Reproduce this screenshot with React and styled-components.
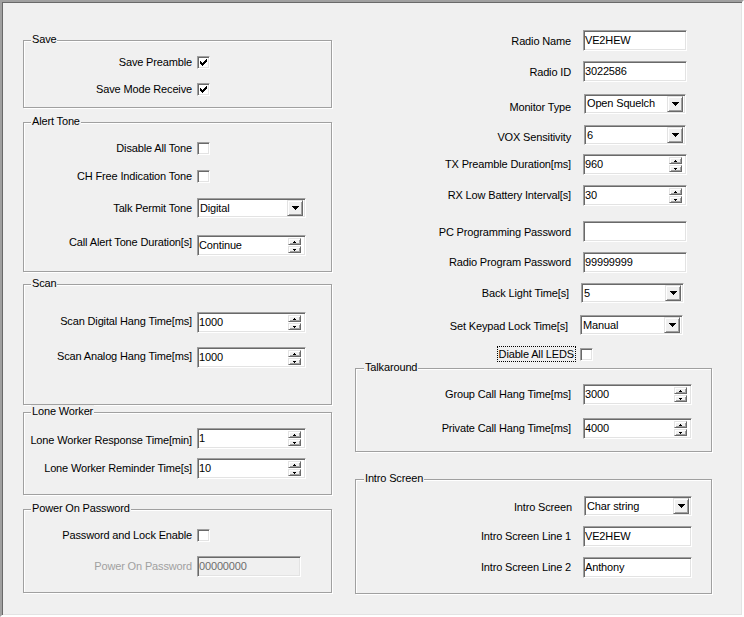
import React from 'react';
import styled, { createGlobalStyle, css } from 'styled-components';

const Global = createGlobalStyle`
  html, body { margin: 0; padding: 0; background: #f0f0f0; }
  body { font-family: "Liberation Sans", Arial, sans-serif; font-size: 11px; letter-spacing: -0.15px; color: #000; }
  * { box-sizing: border-box; }
`;

const sunken = css`
  border: 1px solid;
  border-color: #a0a0a0 #fff #fff #a0a0a0;
  box-shadow: inset 1px 1px 0 #696969, inset -1px -1px 0 #e3e3e3;
`;

const raised = css`
  border: 1px solid;
  border-color: #e3e3e3 #696969 #696969 #e3e3e3;
  box-shadow: inset 1px 1px 0 #fff, inset -1px -1px 0 #a0a0a0;
  background: #f0f0f0;
`;

const Window = styled.div`
  width: 744px;
  height: 617px;
  border-style: solid;
  border-width: 2px;
  border-color: #a0a0a0 #fff #fff #a0a0a0;
  box-shadow: inset 1px 1px 0 #696969, inset -1px -1px 0 #e3e3e3;
  background: #f0f0f0;
  display: grid;
  grid-template-columns: 309px 357px;
  column-gap: 23px;
  padding-left: 21px;
  align-items: start;
`;

const Column = styled.div`
  display: flex;
  flex-direction: column;
  padding-top: ${(p) => p.$top}px;
`;

const Group = styled.div`
  position: relative;
  display: flex;
  flex-direction: column;
  height: ${(p) => p.$h}px;
  margin-top: ${(p) => p.$mt || 0}px;
  padding-top: ${(p) => p.$pt}px;
  border: 1px solid #a0a0a0;
  box-shadow: 1px 1px 0 #fff, inset 1px 1px 0 #fff;
`;

const Legend = styled.span`
  position: absolute;
  top: -8px;
  left: ${(p) => p.$left}px;
  padding: 0 1px;
  line-height: 13px;
  background: #f0f0f0;
  white-space: nowrap;
`;

const Row = styled.div`
  display: grid;
  grid-template-columns: ${(p) => p.$label}px max-content;
  column-gap: ${(p) => p.$gap}px;
  align-items: center;
  margin-top: ${(p) => p.$mt || 0}px;
`;

const Label = styled.span`
  text-align: right;
  white-space: nowrap;
  line-height: 13px;
  color: ${(p) => (p.$disabled ? '#a0a0a0' : '#000')};
  ${(p) => (p.$dy > 0 ? `margin-top: ${p.$dy * 2}px;` : '')}
  ${(p) => (p.$dy < 0 ? `margin-bottom: ${-p.$dy * 2}px;` : '')}
`;

const FocusLabel = styled.span`
  justify-self: end;
  white-space: nowrap;
  line-height: 14px;
  padding: 0 1px;
  border: 1px dotted #000;
`;

const TextBox = styled.div`
  ${sunken}
  width: ${(p) => p.$w}px;
  height: 21px;
  padding: 3px 0 0 1px;
  line-height: 13px;
  white-space: nowrap;
  background: ${(p) => (p.$disabled ? '#f0f0f0' : '#fff')};
  color: ${(p) => (p.$disabled ? '#6d6d6d' : '#000')};
`;

const ComboBox = styled.div`
  ${sunken}
  width: ${(p) => p.$w}px;
  height: 20px;
  padding: 1px 2px 1px 1px;
  display: flex;
  align-items: center;
  background: #fff;
`;

const FieldText = styled.span`
  flex: 1;
  padding-left: 1px;
  line-height: 13px;
  white-space: nowrap;
`;

const DropButton = styled.span`
  ${raised}
  width: 16px;
  height: 16px;
  display: flex;
  align-items: center;
  justify-content: center;
`;

const SpinBox = styled.div`
  ${sunken}
  width: ${(p) => p.$w}px;
  height: 21px;
  padding: 2px 4px 2px 1px;
  display: flex;
  align-items: stretch;
  background: #fff;
`;

const SpinText = styled.span`
  flex: 1;
  padding: 1px 0 0 0;
  line-height: 13px;
  white-space: nowrap;
`;

const SpinButtons = styled.span`
  display: flex;
  flex-direction: column;
  width: 13px;
  gap: 1px;
`;

const SpinButton = styled.span`
  ${raised}
  flex: 1;
  display: flex;
  align-items: center;
  justify-content: center;
`;

const CheckBox = styled.span`
  ${sunken}
  width: 13px;
  height: 13px;
  display: flex;
  align-items: center;
  justify-content: center;
  background: #fff;
`;

const Arrow = () => (
  <svg width="7" height="4" viewBox="0 0 7 4" shapeRendering="crispEdges">
    <path d="M0 0h7v1H0z M1 1h5v1H1z M2 2h3v1H2z M3 3h1v1H3z" fill="#000" />
  </svg>
);

const SmallArrow = ({ up }) => (
  <svg width="3" height="2" viewBox="0 0 3 2" shapeRendering="crispEdges">
    <path d={up ? 'M1 0h1v1H1z M0 1h3v1H0z' : 'M0 0h3v1H0z M1 1h1v1H1z'} fill="#000" />
  </svg>
);

const Tick = () => (
  <svg width="7" height="7" viewBox="0 0 7 7" shapeRendering="crispEdges">
    <path
      d="M6 0h1v1H6z M5 1h2v1H5z M0 2h1v1H0z M4 2h3v1H4z M0 3h2v1H0z M3 3h3v1H3z M0 4h5v1H0z M1 5h3v1H1z M2 6h1v1H2z"
      fill="#000"
    />
  </svg>
);

const Check = ({ on }) => <CheckBox>{on && <Tick />}</CheckBox>;

const Combo = ({ w, value }) => (
  <ComboBox $w={w}>
    <FieldText>{value}</FieldText>
    <DropButton>
      <Arrow />
    </DropButton>
  </ComboBox>
);

const Spin = ({ w, value }) => (
  <SpinBox $w={w}>
    <SpinText>{value}</SpinText>
    <SpinButtons>
      <SpinButton>
        <SmallArrow up />
      </SpinButton>
      <SpinButton>
        <SmallArrow />
      </SpinButton>
    </SpinButtons>
  </SpinBox>
);

const L = { $label: 168, $gap: 5 };
const R = { $label: 216, $gap: 12 };
const G = { $label: 215, $gap: 12 };

export default function App() {
  return (
    <>
      <Global />
      <Window>
        <Column $top={38}>
          <Group $h={68} $pt={15}>
            <Legend $left={7}>Save</Legend>
            <Row {...L}>
              <Label>Save Preamble</Label>
              <Check on />
            </Row>
            <Row {...L} $mt={14}>
              <Label>Save Mode Receive</Label>
              <Check on />
            </Row>
          </Group>

          <Group $h={150} $pt={19} $mt={14}>
            <Legend $left={7}>Alert Tone</Legend>
            <Row {...L}>
              <Label>Disable All Tone</Label>
              <Check />
            </Row>
            <Row {...L} $mt={15}>
              <Label>CH Free Indication Tone</Label>
              <Check />
            </Row>
            <Row {...L} $mt={15}>
              <Label>Talk Permit Tone</Label>
              <Combo w={109} value="Digital" />
            </Row>
            <Row {...L} $mt={17}>
              <Label $dy={-3}>Call Alert Tone Duration[s]</Label>
              <Spin w={109} value="Continue" />
            </Row>
          </Group>

          <Group $h={121} $pt={27} $mt={12}>
            <Legend $left={7}>Scan</Legend>
            <Row {...L}>
              <Label $dy={-1}>Scan Digital Hang Time[ms]</Label>
              <Spin w={109} value="1000" />
            </Row>
            <Row {...L} $mt={14}>
              <Label $dy={-1}>Scan Analog Hang Time[ms]</Label>
              <Spin w={109} value="1000" />
            </Row>
          </Group>

          <Group $h={83} $pt={15} $mt={7}>
            <Legend $left={7}>Lone Worker</Legend>
            <Row {...L}>
              <Label $dy={2}>Lone Worker Response Time[min]</Label>
              <Spin w={109} value="1" />
            </Row>
            <Row {...L} $mt={9}>
              <Label>Lone Worker Reminder Time[s]</Label>
              <Spin w={109} value="10" />
            </Row>
          </Group>

          <Group $h={84} $pt={19} $mt={14}>
            <Legend $left={7}>Power On Password</Legend>
            <Row {...L}>
              <Label>Password and Lock Enable</Label>
              <Check />
            </Row>
            <Row {...L} $mt={14}>
              <Label $disabled>Power On Password</Label>
              <TextBox $w={104} $disabled>
                00000000
              </TextBox>
            </Row>
          </Group>
        </Column>

        <Column $top={28}>
          <Row {...R}>
            <Label $dy={1}>Radio Name</Label>
            <TextBox $w={104}>VE2HEW</TextBox>
          </Row>
          <Row {...R} $mt={10}>
            <Label $dy={1}>Radio ID</Label>
            <TextBox $w={104}>3022586</TextBox>
          </Row>
          <Row $label={216} $gap={13} $mt={11}>
            <Label $dy={4}>Monitor Type</Label>
            <Combo w={102} value="Open Squelch" />
          </Row>
          <Row $label={216} $gap={13} $mt={11}>
            <Label $dy={2}>VOX Sensitivity</Label>
            <Combo w={102} value="6" />
          </Row>
          <Row {...R} $mt={9}>
            <Label>TX Preamble Duration[ms]</Label>
            <Spin w={104} value="960" />
          </Row>
          <Row {...R} $mt={10}>
            <Label>RX Low Battery Interval[s]</Label>
            <Spin w={104} value="30" />
          </Row>
          <Row {...R} $mt={15}>
            <Label $dy={1}>PC Programming Password</Label>
            <TextBox $w={104} />
          </Row>
          <Row {...R} $mt={10}>
            <Label>Radio Program Password</Label>
            <TextBox $w={104}>99999999</TextBox>
          </Row>
          <Row $label={214} $gap={12} $mt={10}>
            <Label>Back Light Time[s]</Label>
            <Combo w={103} value="5" />
          </Row>
          <Row $label={213} $gap={12} $mt={12}>
            <Label $dy={1}>Set Keypad Lock Time[s]</Label>
            <Combo w={103} value="Manual" />
          </Row>
          <Row $label={221} $gap={4} $mt={11}>
            <FocusLabel>Diable All LEDS</FocusLabel>
            <Check />
          </Row>

          <Group $h={84} $pt={15} $mt={6}>
            <Legend $left={8}>Talkaround</Legend>
            <Row {...G}>
              <Label>Group Call Hang Time[ms]</Label>
              <Spin w={109} value="3000" />
            </Row>
            <Row {...G} $mt={13}>
              <Label>Private Call Hang Time[ms]</Label>
              <Spin w={109} value="4000" />
            </Row>
          </Group>

          <Group $h={115} $pt={16} $mt={27}>
            <Legend $left={8}>Intro Screen</Legend>
            <Row $label={216} $gap={12}>
              <Label $dy={1}>Intro Screen</Label>
              <Combo w={108} value="Char string" />
            </Row>
            <Row {...G} $mt={10}>
              <Label>Intro Screen Line 1</Label>
              <TextBox $w={109}>VE2HEW</TextBox>
            </Row>
            <Row {...G} $mt={10}>
              <Label>Intro Screen Line 2</Label>
              <TextBox $w={109}>Anthony</TextBox>
            </Row>
          </Group>
        </Column>
      </Window>
    </>
  );
}
